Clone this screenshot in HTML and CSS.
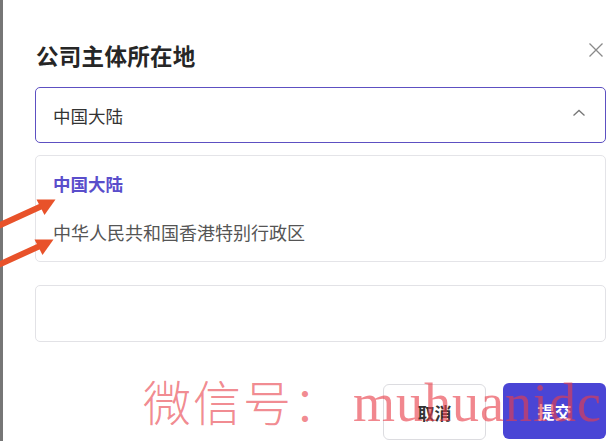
FILE: index.html
```html
<!DOCTYPE html>
<html lang="zh-CN">
<head>
<meta charset="utf-8">
<title>公司主体所在地</title>
<link rel="stylesheet" href="styles.css">
</head>
<body>
<div class="page">
  <div class="edge"></div>
  <div class="modal">
    <div class="header">
      <h1 class="title">公司主体所在地</h1>
      <svg class="close" width="16" height="16" viewBox="0 0 16 16"><path d="M1.5 1.5 L14.5 14.5 M14.5 1.5 L1.5 14.5" stroke="#8a8a8a" stroke-width="1.3" fill="none"/></svg>
    </div>
    <div class="select">
      <span class="select-value">中国大陆</span>
      <svg class="chevron" width="14" height="8" viewBox="0 0 14 8"><path d="M1.5 6.5 L7 1.5 L12.5 6.5" stroke="#777" stroke-width="1.3" fill="none"/></svg>
    </div>
    <div class="dropdown">
      <div class="option active">中国大陆</div>
      <div class="option">中华人民共和国香港特别行政区</div>
    </div>
    <div class="field"></div>
    <div class="actions">
      <button class="btn btn-cancel">取消</button>
      <button class="btn btn-submit">提交</button>
    </div>
  </div>
  <svg class="arrows" width="70" height="90" viewBox="0 190 70 90">
    <line x1="-4" y1="227" x2="43" y2="205.5" stroke="#e8522a" stroke-width="6" stroke-linecap="round"/>
    <polygon points="55.5,199.5 44.5,215 36.5,199.5" fill="#e8522a"/>
    <line x1="-4" y1="266" x2="41" y2="245.5" stroke="#e8522a" stroke-width="6" stroke-linecap="round"/>
    <polygon points="53.5,239.5 42.5,255 34.5,239.5" fill="#e8522a"/>
  </svg>
  <div class="watermark"><span class="wm-cjk">微信号：</span><span class="wm-latin">muhuanidc</span></div>
</div>
</body>
</html>
```
FILE: styles.css
```css
html, body {
  margin: 0;
  padding: 0;
  background: #ffffff;
}
body {
  font-family: "Noto Sans CJK SC", "Noto Sans", sans-serif;
  width: 615px;
  height: 441px;
  overflow: hidden;
}
.page {
  position: relative;
  display: flex;
  width: 615px;
  height: 441px;
}
.edge {
  width: 3px;
  flex: 0 0 3px;
  background: #767676;
}
.modal {
  flex: 1;
  padding: 40px 9px 0 32px;
  display: flex;
  flex-direction: column;
  background: #fff;
}
.header {
  display: flex;
  align-items: center;
  justify-content: space-between;
  height: 30px;
}
.title {
  margin: 0 0 0 1px;
  font-size: 22.5px;
  line-height: 30px;
  font-weight: 700;
  color: #262626;
  letter-spacing: 0.3px;
}
.close {
  margin-right: 2px;
  margin-top: -11px;
}
.select {
  margin-top: 17px;
  height: 56px;
  box-sizing: border-box;
  border: 1.5px solid #5d50c2;
  border-radius: 5px;
  display: flex;
  align-items: center;
  justify-content: space-between;
  padding: 0 19px 0 17px;
}
.select-value {
  font-size: 17.5px;
  color: #333;
}
.chevron {
  margin-top: -4px;
}
.dropdown {
  margin-top: 12px;
  height: 107px;
  box-sizing: border-box;
  border: 1px solid #e4e4e8;
  border-radius: 5px;
  padding: 3px 0;
}
.option {
  height: 49px;
  line-height: 49px;
  padding-left: 17px;
  font-size: 18px;
  color: #555;
}
.option.active {
  color: #5a4ecb;
  font-weight: 700;
  font-size: 17.5px;
}
.field {
  margin-top: 23px;
  height: 57px;
  box-sizing: border-box;
  border: 1px solid #e2e2e6;
  border-radius: 5px;
}
.actions {
  margin-top: 42px;
  display: flex;
  justify-content: flex-end;
  gap: 17px;
}
.btn {
  width: 103px;
  height: 56px;
  border-radius: 6px;
  font-family: "Noto Sans CJK SC", sans-serif;
  font-size: 17px;
  font-weight: 700;
  padding: 0;
}
.btn-cancel {
  background: #fff;
  border: 1px solid #dcdce0;
  color: #333;
}
.btn-submit {
  background: #4a45d5;
  border: none;
  color: #fff;
  margin-top: -1px;
}
.arrows {
  position: absolute;
  left: 0;
  top: 190px;
}
.watermark {
  position: absolute;
  left: 143px;
  top: 368px;
  color: rgba(232, 62, 72, 0.62);
  white-space: nowrap;
  line-height: 64px;
  pointer-events: none;
}
.wm-cjk {
  font-family: "Noto Sans CJK SC", sans-serif;
  font-weight: 300;
  font-size: 48px;
  letter-spacing: 2px;
}
.wm-latin {
  font-family: "Liberation Serif", serif;
  font-size: 54px;
  letter-spacing: 1px;
  margin-left: 10px;
}
```
